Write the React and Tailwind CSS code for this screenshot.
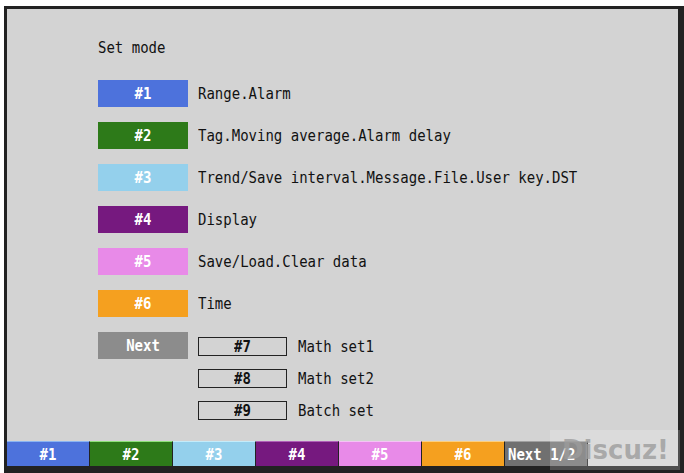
import React from 'react';

const modes = [
  { id: '#1', label: 'Range.Alarm', color: 'bg-[#4d72dc]' },
  { id: '#2', label: 'Tag.Moving average.Alarm delay', color: 'bg-[#2d7a19]' },
  { id: '#3', label: 'Trend/Save interval.Message.File.User key.DST', color: 'bg-[#94d0ec]' },
  { id: '#4', label: 'Display', color: 'bg-[#76197f]' },
  { id: '#5', label: 'Save/Load.Clear data', color: 'bg-[#e88ae8]' },
  { id: '#6', label: 'Time', color: 'bg-[#f5a01f]' },
];

const subModes = [
  { id: '#7', label: 'Math set1' },
  { id: '#8', label: 'Math set2' },
  { id: '#9', label: 'Batch set' },
];

const tabs = [
  { id: '#1', color: 'bg-[#4d72dc] border-t-[#8ab4f2]' },
  { id: '#2', color: 'bg-[#2d7a19] border-t-[#8ee07a]' },
  { id: '#3', color: 'bg-[#94d0ec] border-t-[#c4ecfa]' },
  { id: '#4', color: 'bg-[#76197f] border-t-[#b060b8]' },
  { id: '#5', color: 'bg-[#e88ae8] border-t-[#f6c2f6]' },
  { id: '#6', color: 'bg-[#f5a01f] border-t-[#fbcf80]' },
  { id: 'Next 1/2', color: 'bg-[#707070] border-t-[#a0a0a0]', left: true },
];

const mono = "font-['DejaVu_Sans_Mono',monospace] text-[14px]";

// the recorder's bitmap font is narrow and tall, so stretch glyphs vertically
const Txt = ({ children, className = '' }) => (
  <span className={`inline-block scale-y-[1.18] whitespace-pre ${className}`}>{children}</span>
);

export default function App() {
  return (
    <div className="relative w-[684px] h-[473px] bg-white pt-[6px] pl-[4px] overflow-hidden">
      {/* recorder screen */}
      <div className={`h-full flex flex-col bg-[#d3d3d3] border-t-[3px] border-l-[3px] border-r-[6px] border-b-[7px] border-[#222] ${mono}`}>
        <div className="pl-[91px] pt-[28px]">
          <div className="h-[20px] leading-[20px] text-[#111]">
            <Txt>Set mode</Txt>
          </div>

          <div className="mt-[23px] flex flex-col gap-[15px]">
            {modes.map((m) => (
              <div key={m.id} className="flex items-center h-[27px]">
                <div className={`w-[90px] h-[27px] ${m.color} flex items-center justify-center text-white font-bold`}>
                  <Txt>{m.id}</Txt>
                </div>
                <Txt className="ml-[10px] text-[#111]">{m.label}</Txt>
              </div>
            ))}

            <div className="flex items-start">
              <div className="w-[90px] h-[27px] bg-[#8c8c8c] flex items-center justify-center text-white font-bold">
                <Txt>Next</Txt>
              </div>
              <div className="ml-[10px] pt-[5px] flex flex-col gap-[13px]">
                {subModes.map((s) => (
                  <div key={s.id} className="flex items-center h-[19px]">
                    <div className="w-[89px] h-[19px] border border-[#222] flex items-center justify-center text-[#111] font-bold">
                      <Txt>{s.id}</Txt>
                    </div>
                    <Txt className="ml-[11px] text-[#111]">{s.label}</Txt>
                  </div>
                ))}
              </div>
            </div>
          </div>
        </div>

        {/* soft key bar */}
        <div className="mt-auto flex h-[25px]">
          {tabs.map((t) => (
            <div
              key={t.id}
              className={`w-[83px] h-full border-t border-r border-r-[#222] ${t.color} flex items-center text-white font-bold ${t.left ? 'pl-[3px]' : 'justify-center'}`}
            >
              <Txt>{t.id}</Txt>
            </div>
          ))}
        </div>
      </div>

      {/* forum watermark */}
      <div className="absolute left-[550px] top-[430px] w-[130px] h-[40px] bg-white/20 flex items-center pl-[12px]">
        <span className="font-['DejaVu_Sans',sans-serif] font-bold text-[26px] text-[#9c9c9c]/80 leading-none">Discuz!</span>
      </div>
    </div>
  );
}
